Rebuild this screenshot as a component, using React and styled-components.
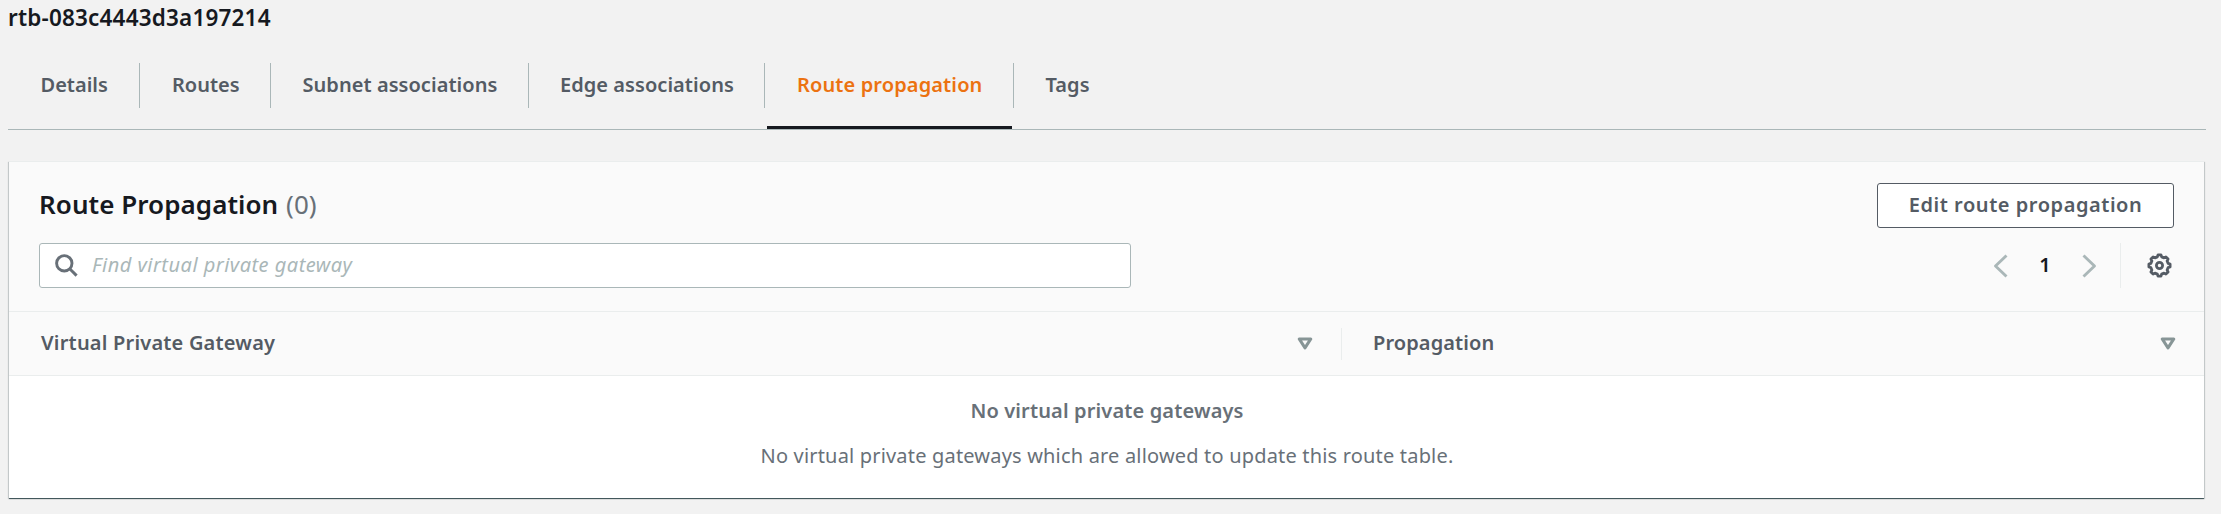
import React from "react";
import styled, { createGlobalStyle } from "styled-components";

const GlobalStyle = createGlobalStyle`
  * { box-sizing: border-box; }
  body { margin: 0; background: #f2f2f2; font-family: "Noto Sans", "Open Sans", sans-serif; font-size: 20px; line-height: 28px; color: #16191f; }
`;

const Page = styled.main`
  height: 514px;
  padding: 0 15px 0 8px;
  display: flex;
  flex-direction: column;
`;
const ResourceId = styled.h1`
  margin: 0;
  padding-top: 3px;
  height: 47px;
  font-size: 22.5px;
  line-height: 30px;
  font-weight: 600;
  letter-spacing: 0.18px;
`;
const TabBar = styled.nav`
  display: flex;
  height: 83px;
  border-bottom: 1px solid #aab7b8;
`;
const Tab = styled.a`
  flex: none;
  width: ${(p) => p.$width}px;
  display: flex;
  flex-direction: column;
  justify-content: space-between;
  color: ${(p) => (p.$active ? "#ec7211" : "#545b64")};
  font-weight: 600;
  letter-spacing: ${(p) => p.$track}px;
`;
const TabLabel = styled.span`
  margin-top: 16px;
  height: 45px;
  padding-left: ${(p) => p.$inset}px;
  line-height: 43px;
  white-space: nowrap;
  border-right: ${(p) => (p.$last ? "0" : "1px solid #aab7b8")};
`;
const TabMarker = styled.span`
  height: 3px;
  margin: 0 2px 0 2px;
  background: #16191f;
`;
const Panel = styled.section`
  margin: 31px 0 0 1px;
  height: 337px;
  width: 2195px;
  background: #fff;
  border-top: 1px solid #eaeded;
  box-shadow: 0 1px 1px 0 rgba(0, 28, 36, 0.3), 1px 1px 1px 0 rgba(0, 28, 36, 0.15), -1px 1px 1px 0 rgba(0, 28, 36, 0.15), 0 1px 0 0 #879596;
`;
const PanelHeader = styled.header`
  height: 150px;
  padding: 21px 30px 0 30px;
  background: #fafafa;
  border-bottom: 1px solid #eaeded;
`;
const HeaderRow = styled.div`
  display: flex;
  justify-content: space-between;
  height: ${(p) => p.$height}px;
`;
const Heading = styled.h2`
  margin: 3px 0 0 0;
  font-size: 26px;
  line-height: 36px;
  font-weight: 600;
  letter-spacing: 0.06px;
`;
const Count = styled.span`
  margin-left: 1px;
  font-weight: 400;
  color: #687078;
`;
const Button = styled.button`
  width: 297px;
  height: 45px;
  padding: 0 0 2px;
  border: 1px solid #545b64;
  border-radius: 3px;
  background: #fff;
  color: #545b64;
  font: 600 20px/28px "Noto Sans", "Open Sans", sans-serif;
  letter-spacing: 0.55px;
`;
const SearchBox = styled.label`
  display: flex;
  align-items: center;
  width: 1092px;
  height: 45px;
  padding-left: 15px;
  border: 1px solid #aab7b8;
  border-radius: 3px;
  background: #fff;
`;
const SearchInput = styled.input`
  flex: 1;
  margin-left: 14px;
  padding: 0 0 2px;
  border: 0;
  outline: 0;
  background: transparent;
  font: italic 400 20px/28px "Noto Sans", "Open Sans", sans-serif;
  letter-spacing: 0.48px;
  &::placeholder { color: #aab7b8; opacity: 1; }
`;
const Pager = styled.div`
  display: flex;
  align-items: center;
  height: 45px;
  margin-right: 2px;
`;
const PageNumber = styled.span`
  width: 74px;
  padding-bottom: 2px;
  text-align: center;
  font-weight: 600;
`;
const PagerDivider = styled.span`
  width: 1px;
  height: 45px;
  margin: 0 26px 0 23px;
  background: #eaeded;
`;
const Columns = styled.div`
  display: flex;
  align-items: center;
  height: 64px;
  background: #fafafa;
  border-bottom: 1px solid #eaeded;
`;
const Column = styled.div`
  display: flex;
  align-items: center;
  justify-content: space-between;
  height: 32px;
  padding: 0 28px 0 ${(p) => (p.$grow ? 31 : 32)}px;
  color: #545b64;
  width: ${(p) => (p.$grow ? "auto" : "1333px")};
  flex: ${(p) => (p.$grow ? "1" : "none")};
  border-right: ${(p) => (p.$grow ? "0" : "1px solid #eaeded")};
`;
const ColumnLabel = styled.span`
  padding-bottom: 1px;
  font-weight: 600;
  letter-spacing: ${(p) => p.$track}px;
`;
const Empty = styled.div`
  display: flex;
  flex-direction: column;
  align-items: center;
  gap: 17px;
  padding: 21px 0 0 1px;
  color: #687078;
`;
const EmptyTitle = styled.strong`
  font-weight: 600;
  letter-spacing: 0.14px;
`;
const EmptyText = styled.span`
  letter-spacing: 0.18px;
`;

const SearchIcon = () => (
  <svg width="23" height="23" viewBox="0 0 23 23" fill="none" stroke="#687078" strokeWidth="2.9">
    <circle cx="9.3" cy="9.3" r="7.7" />
    <path d="M14.7 14.7 21.6 21.6" />
  </svg>
);
const Chevron = ({ right }) => (
  <svg width="15" height="24" viewBox="0 0 15 24" fill="none" stroke="#aab7b8" strokeWidth="2.9" strokeLinejoin="round">
    <path d={right ? "M1.5 1.5 12.5 12 1.5 22.5" : "M13.5 1.5 2.5 12 13.5 22.5"} />
  </svg>
);
const gearPath = (() => {
  const points = [];
  for (let i = 0; i < 8; i += 1) {
    [[-14, 8.9], [-8, 10.7], [8, 10.7], [14, 8.9]].forEach(([offset, radius]) => {
      const angle = ((i * 45 + offset) * Math.PI) / 180;
      points.push(`${(12.5 + radius * Math.sin(angle)).toFixed(2)} ${(12.5 - radius * Math.cos(angle)).toFixed(2)}`);
    });
  }
  return `M${points.join("L")}Z`;
})();
const GearIcon = () => (
  <svg width="25" height="25" viewBox="0 0 25 25" fill="none" stroke="#545b64" strokeWidth="2.8" strokeLinejoin="round">
    <path d={gearPath} />
    <circle cx="12.5" cy="12.5" r="3.1" />
  </svg>
);
const SortIcon = () => (
  <svg width="16" height="13" viewBox="0 0 16 13" fill="none" stroke="#879596" strokeWidth="3" strokeLinejoin="round">
    <path d="M2.2 1.9H13.8L8 10.9Z" />
  </svg>
);

const tabs = [
  { label: "Details", width: 132, track: 0, inset: 32.5 },
  { label: "Routes", width: 131, track: 0, inset: 32 },
  { label: "Subnet associations", width: 258, track: 0.05, inset: 31.5 },
  { label: "Edge associations", width: 236, track: 0.05, inset: 31 },
  { label: "Route propagation", width: 249, track: 0.12, inset: 32, active: true },
  { label: "Tags", width: 120, track: 0.05, inset: 31.5 },
];

export default function App() {
  return (
    <>
      <GlobalStyle />
      <Page>
        <ResourceId>rtb-083c4443d3a197214</ResourceId>
        <TabBar>
          {tabs.map((t, i) => (
            <Tab key={t.label} $width={t.width} $track={t.track} $active={t.active}>
              <TabLabel $inset={t.inset} $last={i === tabs.length - 1}>{t.label}</TabLabel>
              {t.active && <TabMarker />}
            </Tab>
          ))}
        </TabBar>
        <Panel>
          <PanelHeader>
            <HeaderRow $height={60}>
              <Heading>Route Propagation <Count>(0)</Count></Heading>
              <Button>Edit route propagation</Button>
            </HeaderRow>
            <HeaderRow $height={45}>
              <SearchBox>
                <SearchIcon />
                <SearchInput placeholder="Find virtual private gateway" />
              </SearchBox>
              <Pager>
                <Chevron />
                <PageNumber>1</PageNumber>
                <Chevron right />
                <PagerDivider />
                <GearIcon />
              </Pager>
            </HeaderRow>
          </PanelHeader>
          <Columns>
            <Column><ColumnLabel $track={0.2}>Virtual Private Gateway</ColumnLabel><SortIcon /></Column>
            <Column $grow><ColumnLabel $track={0.1}>Propagation</ColumnLabel><SortIcon /></Column>
          </Columns>
          <Empty>
            <EmptyTitle>No virtual private gateways</EmptyTitle>
            <EmptyText>No virtual private gateways which are allowed to update this route table.</EmptyText>
          </Empty>
        </Panel>
      </Page>
    </>
  );
}
